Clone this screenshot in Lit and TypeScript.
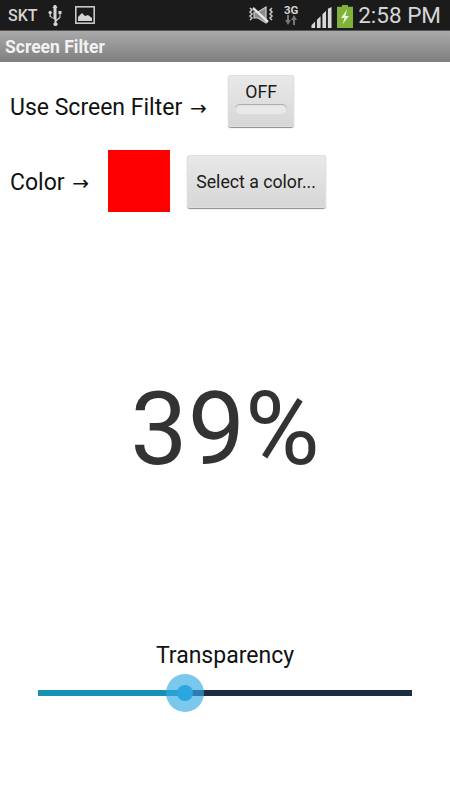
import { LitElement, html, css } from "lit";
import { customElement } from "lit/decorators.js";

@customElement("app-root")
export class AppRoot extends LitElement {
  static styles = css`
    :host { display: block; width: 450px; height: 800px; background: #fff; font-family: Roboto, "Liberation Sans", sans-serif; color: #111; overflow: hidden; }
    .status { height: 30px; background: #1b1b1b; display: flex; align-items: center; padding: 0 9px 0 8px; color: #d4d4d4; box-sizing: border-box; }
    .status svg { display: block; flex: none; }
    .carrier { font-size: 16px; font-weight: 500; width: 38px; }
    .usb { margin-left: 1px; }
    .pic { margin-left: 12px; }
    .spacer { flex: 1; }
    .g3 { display: flex; flex-direction: column; align-items: center; margin-left: 9px; width: 16px; font-size: 11.5px; font-weight: 700; line-height: 10px; }
    .signal { margin: 5px 0 0 12px; }
    .batt { margin: 3px 0 0 5px; }
    .time { font-size: 22.5px; margin-left: 5px; color: #d6d6d6; }
    .title { height: 32px; background: linear-gradient(#a9a9a9, #7f7f7f); border-top: 1px solid #555; box-sizing: border-box; color: #f2f2f2; font-weight: 700; font-size: 17.5px; line-height: 32px; padding-left: 5px; }
    .row { display: flex; align-items: center; padding-left: 10px; font-size: 23px; }
    .r1 { margin-top: 13px; height: 52px; }
    .r2 { margin-top: 23px; height: 62px; }
    .r1 .txt { margin-top: 12px; }
    .r2 .txt { margin-top: 2px; }
    .arrow { font-family: "DejaVu Sans", sans-serif; font-size: 20px; margin-left: 2px; }
    .btn { box-sizing: border-box; background: linear-gradient(#e9e9e9, #d6d6d6); border-radius: 3px; box-shadow: 0 1px 1px #8b8b8b, inset 0 0 0 1px #dedede; color: #1a1a1a; font-size: 17.7px; display: flex; align-items: center; justify-content: center; }
    .toggle { width: 66px; height: 52px; margin-left: 21.5px; flex-direction: column; justify-content: flex-start; padding-top: 7px; }
    .track { width: 52px; height: 10px; margin-top: 2px; border-radius: 5px; background: #e8e8e8; box-shadow: inset 0 1px 1px #a8a8a8; }
    .swatch { width: 62px; height: 62px; background: #f00; margin-left: 18.500px; }
    .select { width: 139px; height: 53px; margin-left: 17px; padding-top: 2px; }
    .percent { margin-top: 157px; text-align: center; font-size: 102px; font-weight: 400; line-height: 120px; color: #333; }
    .label { margin-top: 154px; text-align: center; font-size: 23px; line-height: 26px; }
    .slider { position: relative; margin: 21px 38px 0; height: 6px; background: #1d2e42; display: flex; }
    .fill { background: #1790b6; height: 100%; }
    .halo { position: absolute; width: 38px; height: 38px; top: -16px; border-radius: 50%; background: rgba(51,170,226,.65); transform: translateX(-19px); display: flex; align-items: center; justify-content: center; }
    .dot { width: 16px; height: 16px; border-radius: 50%; background: #2ba6df; }
  `;

  render() {
    const pct = 39.4;
    return html`
      <div class="status">
        <span class="carrier">SKT</span>
        <svg class="usb" width="16" height="22" viewBox="0 0 16 22" fill="#d4d4d4"><path d="M7 1h2l1.500 3h-1v11.500l3-2.500V10h-1V7h3v3h-1v3.800l-4 3.400v1.200a2 2 0 1 1-2 0v-3L2.500 12.500V10a1.600 1.600 0 1 1 1.300 0v2l2.700 2.200V4h-1z"/></svg>
        <svg class="pic" width="20" height="18" viewBox="0 0 20 18"><rect x=".8" y=".8" width="18.400" height="16.400" fill="none" stroke="#c8c8c8" stroke-width="1.600"/><path d="M3 15v-4l4-4 3 3 3-1 4 3v3z" fill="#d4d4d4"/></svg>
        <span class="spacer"></span>
        <svg width="26" height="20" viewBox="0 0 26 20" fill="none" stroke="#cfcfcf" stroke-width="1.500"><path d="M2 3l2 2-2 2 2 2-2 2 2 2-2 2M24 3l-2 2 2 2-2 2 2 2-2 2 2 2"/><path d="M6 7h4l8-5v16l-8-5H6z" fill="#8a8a8a" stroke-width="1.200"/><path d="M5 3l15 14" stroke-width="2.400" stroke="#e4e4e4"/></svg>
        <span class="g3">3G<svg width="12" height="10" viewBox="0 0 12 10" fill="#777"><path d="M2 0h2v5h2L3 10 0 5h2zM8 10h2V5h2L9 0 6 5h2z"/></svg></span>
        <svg class="signal" width="21" height="21" viewBox="0 0 22 23" fill="#d8d8d8"><path d="M0 23v-3l4-4v7zM6 23V14l4-4v13zM12 23V8l4-4v19zM18 23V2l4-2v23z"/></svg>
        <svg class="batt" width="16" height="23" viewBox="0 0 16 25" preserveAspectRatio="none"><path d="M5 0h6v2h5v23H0V2h5z" fill="#7fb23a"/><path d="M10 5L4 14h3.500l-2 7 6.500-9H8.500z" fill="#e8f3d0"/></svg>
        <span class="time">2:58 PM</span>
      </div>
      <div class="title">Screen Filter</div>
      <div class="row r1">
        <span class="txt">Use Screen Filter <span class="arrow">→</span></span>
        <div class="btn toggle">OFF<div class="track"></div></div>
      </div>
      <div class="row r2">
        <span class="txt">Color <span class="arrow">→</span></span>
        <div class="swatch"></div>
        <div class="btn select">Select a color...</div>
      </div>
      <div class="percent">39%</div>
      <div class="label">Transparency</div>
      <div class="slider">
        <div class="fill" style="width:${pct}%"></div>
        <div class="halo" style="left:${pct}%"><div class="dot"></div></div>
      </div>
    `;
  }
}
